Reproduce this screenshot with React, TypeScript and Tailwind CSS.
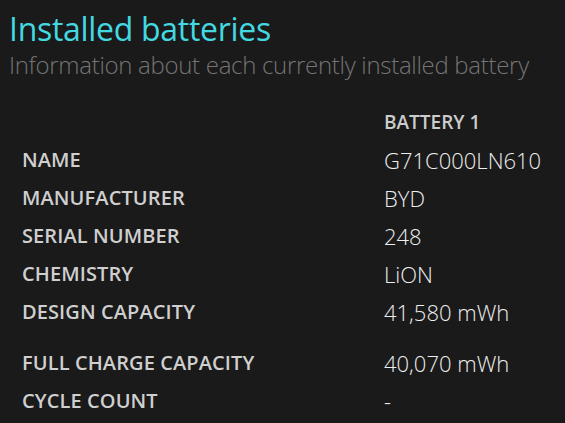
import React from 'react';

const rows: { label: string; value: string; gap?: boolean }[] = [
  { label: 'NAME', value: 'G71C000LN610' },
  { label: 'MANUFACTURER', value: 'BYD' },
  { label: 'SERIAL NUMBER', value: '248' },
  { label: 'CHEMISTRY', value: 'LiON' },
  { label: 'DESIGN CAPACITY', value: '41,580 mWh' },
  { label: 'FULL CHARGE CAPACITY', value: '40,070 mWh', gap: true },
  { label: 'CYCLE COUNT', value: '-' },
];

export default function App() {
  return (
    <div className="w-[565px] h-[423px] bg-[#1a1a1a] overflow-hidden font-['Open_Sans',sans-serif]">
      <div className="pl-[9px] pt-[10px]">
        <h1 className="text-[32px] leading-[38px] text-[#44d8e0] tracking-[-0.3px]">Installed batteries</h1>
        <p className="text-[24px] leading-[34px] font-light text-[#747474] tracking-[-0.3px]">
          Information about each currently installed battery
        </p>
      </div>

      <div className="pl-[22px] mt-[21px]">
        <div className="flex h-[38px] items-center">
          <div className="w-[362px]" />
          <div className="text-[19px] font-semibold text-[#cccccc]">BATTERY 1</div>
        </div>
        {rows.map((r) => (
          <div key={r.label} className={`flex h-[38px] items-center ${r.gap ? 'mt-[13px]' : ''}`}>
            <div className="w-[362px] text-[20px] font-semibold text-[#cfcfcf] tracking-[0.1px]">{r.label}</div>
            <div className="text-[22px] font-light text-[#eeeeee]">{r.value}</div>
          </div>
        ))}
      </div>
    </div>
  );
}
